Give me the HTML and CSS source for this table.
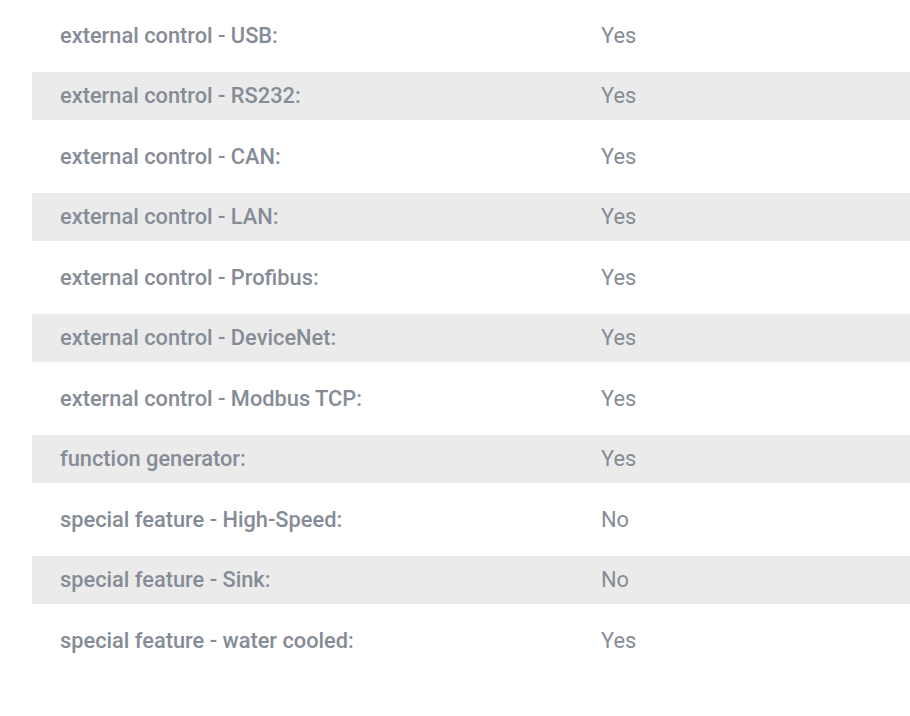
FILE: index.html
```html
<!DOCTYPE html>
<html>
<head>
<meta charset="utf-8">
<link rel="stylesheet" href="styles.css">
</head>
<body>
<div class="specs">
  <div class="row"><div class="label">external control - USB:</div><div class="value">Yes</div></div>
  <div class="row shaded"><div class="label">external control - RS232:</div><div class="value">Yes</div></div>
  <div class="row"><div class="label">external control - CAN:</div><div class="value">Yes</div></div>
  <div class="row shaded"><div class="label">external control - LAN:</div><div class="value">Yes</div></div>
  <div class="row"><div class="label">external control - Profibus:</div><div class="value">Yes</div></div>
  <div class="row shaded"><div class="label">external control - DeviceNet:</div><div class="value">Yes</div></div>
  <div class="row"><div class="label">external control - Modbus TCP:</div><div class="value">Yes</div></div>
  <div class="row shaded"><div class="label">function generator:</div><div class="value">Yes</div></div>
  <div class="row"><div class="label">special feature - High-Speed:</div><div class="value">No</div></div>
  <div class="row shaded"><div class="label">special feature - Sink:</div><div class="value">No</div></div>
  <div class="row"><div class="label">special feature - water cooled:</div><div class="value">Yes</div></div>
</div>
</body>
</html>
```
FILE: styles.css
```css
html, body {
  margin: 0;
  padding: 0;
  background: #ffffff;
}
body {
  font-family: Roboto, "Liberation Sans", sans-serif;
  color: #868c96;
  overflow: hidden;
}
.specs {
  display: flex;
  flex-direction: column;
  gap: 12.5px;
  padding: 11px 0 0 32px;
}
.row {
  display: grid;
  grid-template-columns: 541px 1fr;
  height: 48px;
  align-items: center;
  font-size: 21.8px;
}
.row.shaded {
  background: #ebebeb;
}
.label {
  padding-left: 28px;
  font-weight: 500;
}
.value {
  padding-left: 28px;
  font-weight: 400;
}
```
